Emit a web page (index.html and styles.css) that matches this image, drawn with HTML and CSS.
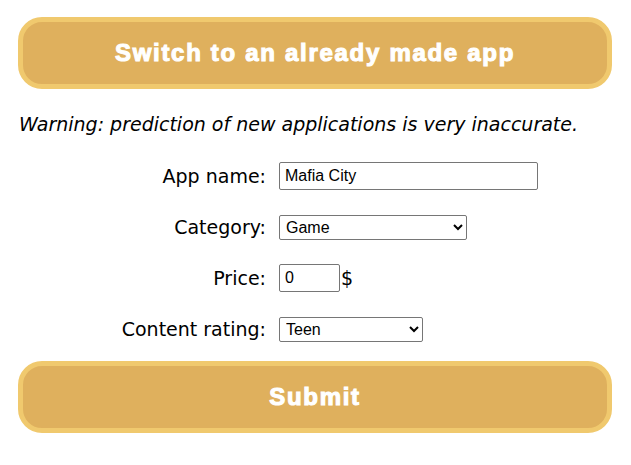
FILE: index.html
```html
<!DOCTYPE html>
<html>
<head>
<meta charset="utf-8">
<link rel="stylesheet" href="styles.css">
</head>
<body>
<button class="big-btn top-btn">Switch to an already made app</button>
<p class="warning">Warning: prediction of new applications is very inaccurate.</p>
<form class="form">
  <label class="lbl" for="name">App name:</label>
  <div class="field"><input id="name" class="text-in name-in" type="text" value="Mafia City"></div>
  <label class="lbl" for="cat">Category:</label>
  <div class="field"><select id="cat" class="sel cat-sel"><option>Game</option></select></div>
  <label class="lbl" for="price">Price:</label>
  <div class="field"><input id="price" class="text-in price-in" type="text" value="0"><span class="dollar">$</span></div>
  <label class="lbl" for="rating">Content rating:</label>
  <div class="field"><select id="rating" class="sel rate-sel"><option>Teen</option></select></div>
</form>
<button class="big-btn submit-btn">Submit</button>
</body>
</html>
```

FILE: styles.css
```css
body {
  margin: 8px;
  background: #fff;
  font-family: "DejaVu Sans", sans-serif;
  color: #000;
}
.big-btn {
  display: block;
  box-sizing: border-box;
  width: calc(100% - 21px);
  margin: 9px 11px 0 10px;
  height: 72px;
  background: #dfb05d;
  border: 5px solid #f0c96e;
  border-radius: 24px;
  color: #fff;
  font-family: "Liberation Sans", Arial, sans-serif;
  font-weight: bold;
  font-size: 24px;
  letter-spacing: 1.7px;
  -webkit-text-stroke: 1.1px #fff;
  cursor: pointer;
}
.warning {
  margin: 21px 0 0 11px;
  font-style: italic;
  font-size: 19px;
  line-height: 28px;
}
.form {
  display: grid;
  grid-template-columns: 258px auto;
  column-gap: 13px;
  row-gap: 23px;
  align-items: center;
  margin-top: 24px;
}
.lbl {
  text-align: right;
  font-size: 19px;
}
.field {
  display: flex;
  align-items: center;
  height: 28px;
}
.text-in, .sel {
  box-sizing: border-box;
  font-family: "Liberation Sans", Arial, sans-serif;
  font-size: 16px;
  border: 1px solid #767676;
  border-radius: 2px;
  color: #000;
  background: #fff;
}
.text-in {
  height: 28px;
  padding: 1px 5px;
}
.name-in { width: 259px; }
.price-in { width: 61px; }
.sel {
  height: 25px;
  padding: 0 2px;
}
.cat-sel { width: 188px; }
.rate-sel { width: 144px; }
.dollar {
  font-size: 19px;
  margin-left: 1px;
}
.submit-btn {
  margin-top: 18px;
}
```
